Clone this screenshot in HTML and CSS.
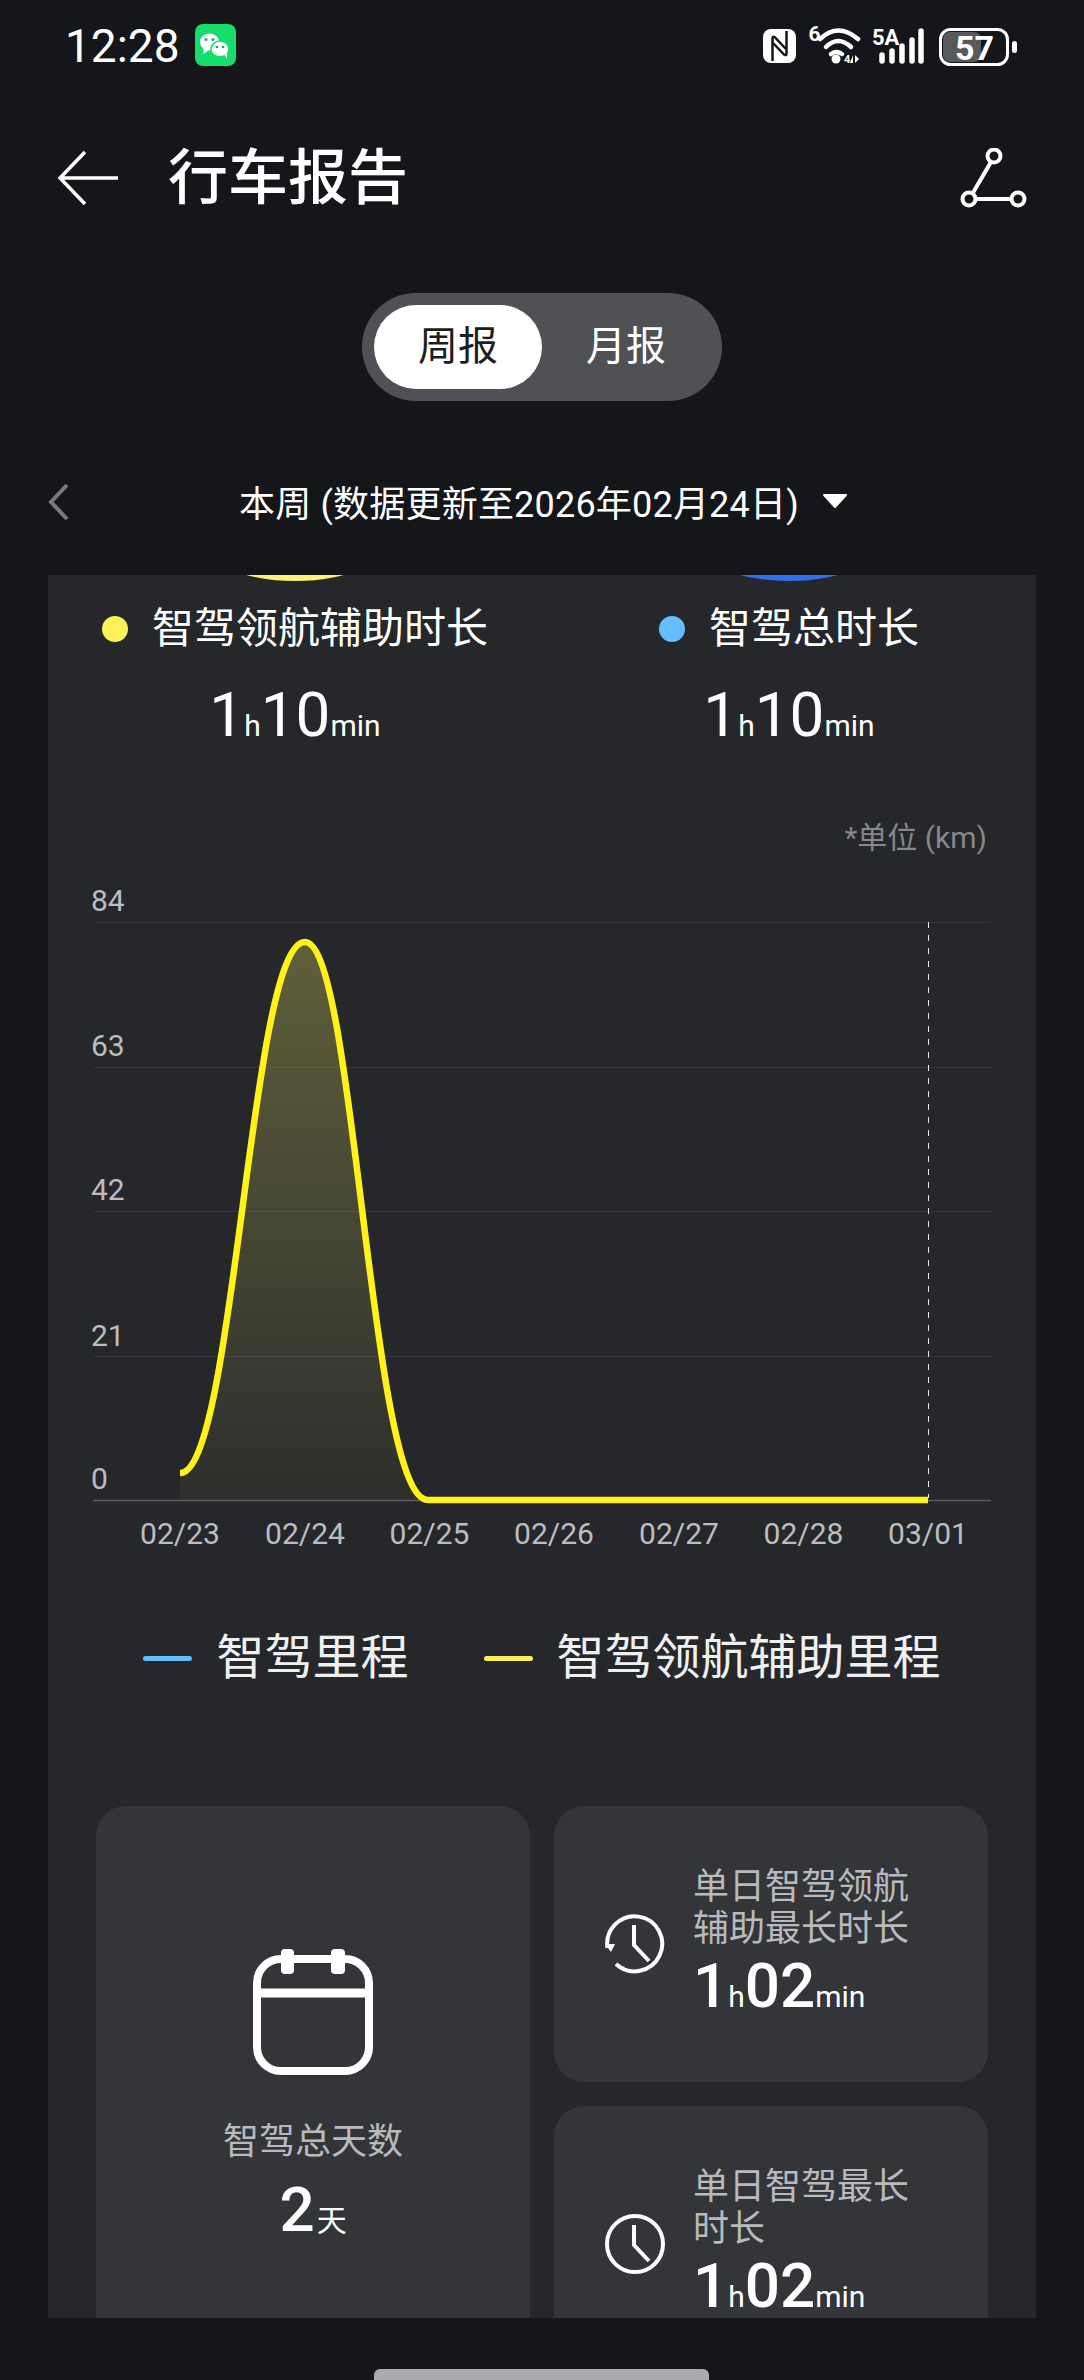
FILE: index.html
```html
<!DOCTYPE html>
<html lang="zh-CN">

<head>
    <meta charset="UTF-8">
    <meta name="viewport" content="width=device-width, initial-scale=1.0">
    <title>行车报告</title>
    <link rel="stylesheet" href="styles.css">
</head>

<body>
    <div class="status-bar">
        <span class="clock-time">12:28</span>
        <svg class="wechat" viewBox="0 0 41 42">
            <rect width="41" height="42" rx="8" fill="#17dd6c" />
            <ellipse cx="14.500" cy="18" rx="9.500" ry="8.500" fill="#fff" />
            <path d="M8 23L8.500 30L14 26z" fill="#fff" />
            <ellipse cx="25" cy="25" rx="9" ry="8" fill="#fff" stroke="#17dd6c" stroke-width="1.500" />
            <path d="M29 30L32 35L32 27z" fill="#fff" />
            <circle cx="11" cy="15.500" r="1.500" fill="#17a85a" />
            <circle cx="18" cy="15.500" r="1.500" fill="#17a85a" />
            <circle cx="22" cy="23" r="1.300" fill="#17a85a" />
            <circle cx="28" cy="23" r="1.300" fill="#17a85a" />
        </svg>
        <svg class="status-icons" viewBox="763 20 256 50">
            <rect x="763" y="29" width="33" height="34" rx="8" fill="#fff" />
            <g fill="none" stroke="#14161a" stroke-width="2.500">
                <path d="M772.500 61V38Q772.500 36 775 37.500L786 49" />
                <path d="M786.500 31V54Q786.500 56 784 54.500L773 43" />
            </g>
            <text class="tiny" x="808.500" y="41" font-size="21">6</text>
            <g fill="none" stroke="#fff" stroke-width="4.500" stroke-linecap="round">
                <path d="M820 39Q838 22 858 39" />
                <path d="M826 47Q838 35 851 47" />
                <path d="M831 54Q836 50 842 54" />
            </g>
            <circle cx="836" cy="59" r="4.500" fill="#fff" />
            <text class="tiny" x="844" y="63" font-size="11">4</text>
            <path d="M853 55v8h-3z" fill="#fff" />
            <path d="M855 55v8l4-4z" fill="#fff" />
            <text class="tiny" x="872" y="45" font-size="22">5A</text>
            <g fill="none" stroke="#fff" stroke-width="5.500" stroke-linecap="round">
                <path d="M882 55V61" />
                <path d="M892 51V61" />
                <path d="M902 46V61" />
                <path d="M912 40V61" />
                <path d="M921 31V61" />
            </g>
            <rect x="943" y="32" width="38" height="30" rx="7" fill="#57595d" />
            <rect x="940.500" y="29.500" width="67" height="35" rx="10" fill="none" stroke="#fff" stroke-width="3" />
            <text class="tiny" x="955" y="60" font-size="34">57</text>
            <rect x="1012" y="41" width="5" height="12" rx="2.500" fill="#fff" />
        </svg>
    </div>

    <header class="top-bar">
        <svg class="back-icon" viewBox="0 0 62 56">
            <path d="M28 2L3 28L28 54M3 28H61" fill="none" stroke="#fff" stroke-width="3.500" />
        </svg>
        <h1 class="page-title">行车报告</h1>
        <svg class="share-icon" viewBox="0 0 68 60">
            <g fill="none" stroke="#fff" stroke-width="4">
                <circle cx="34" cy="8" r="6.500" />
                <circle cx="9" cy="51" r="6.500" />
                <circle cx="58" cy="51" r="6.500" />
                <path d="M31 14L12.500 45.500M15.500 51H51.500" />
            </g>
        </svg>
    </header>

    <div class="period-switch">
        <span class="period-option active">周报</span>
        <span class="period-option">月报</span>
    </div>

    <div class="date-row">
        <svg class="prev-icon" viewBox="0 0 21 38">
            <path d="M19 2L3 19L19 36" fill="none" stroke="#77797c" stroke-width="4" />
        </svg>
        <div class="date-label">
            <span>本周 (数据更新至2026年02月24日)</span>
            <svg class="caret" viewBox="0 0 26 16">
                <path d="M2 2H24L13 14z" fill="#fff" stroke="#fff" stroke-width="2" stroke-linejoin="round" />
            </svg>
        </div>
    </div>

    <main class="report-card">
        <div class="metrics">
            <div class="metric">
                <div class="metric-arc yellow-arc"></div>
                <div class="metric-label"><i class="dot yellow-dot"></i>智驾领航辅助时长</div>
                <div class="value metric-value"><b>1</b><small>h</small><b>10</b><small>min</small></div>
            </div>
            <div class="metric">
                <div class="metric-arc blue-arc"></div>
                <div class="metric-label"><i class="dot blue-dot"></i>智驾总时长</div>
                <div class="value metric-value"><b>1</b><small>h</small><b>10</b><small>min</small></div>
            </div>
        </div>

        <div class="unit-note">*单位 (km)</div>

        <!-- viewBox uses page coordinates so the values read off the reference directly -->
        <svg class="chart" viewBox="48 880 988 680">
            <defs>
                <linearGradient id="area-fill" x1="0" y1="0" x2="0" y2="1">
                    <stop offset="0" stop-color="#f4f060" stop-opacity="0.28" />
                    <stop offset="1" stop-color="#f4f060" stop-opacity="0.04" />
                </linearGradient>
            </defs>
            <g stroke="#33353a" stroke-width="1">
                <path d="M93 922.500H991" />
                <path d="M93 1067.500H991" />
                <path d="M93 1211.500H991" />
                <path d="M93 1356.500H991" />
            </g>
            <path d="M93 1500.500H991" stroke="#5a5c60" stroke-width="1.500" />
            <path d="M928.500 922V1498" stroke="#e8e8e8" stroke-width="1" stroke-dasharray="6 7" />
            <path d="M180 1473C235 1473 250 942 305 942C355 942 370 1500 428 1500V1500.500H180z" fill="url(#area-fill)" />
            <path d="M180 1473C235 1473 250 942 305 942C355 942 370 1500 428 1500H928" fill="none" stroke="#fff21a" stroke-width="6.500" />
            <g class="axis-text">
                <text x="91" y="911">84</text>
                <text x="91" y="1056">63</text>
                <text x="91" y="1200">42</text>
                <text x="91" y="1346">21</text>
                <text x="91" y="1489">0</text>
            </g>
            <g class="axis-text centered">
                <text x="180" y="1544">02/23</text>
                <text x="305" y="1544">02/24</text>
                <text x="429.500" y="1544">02/25</text>
                <text x="554" y="1544">02/26</text>
                <text x="679" y="1544">02/27</text>
                <text x="803.500" y="1544">02/28</text>
                <text x="928" y="1544">03/01</text>
            </g>
        </svg>

        <div class="legend">
            <div class="legend-item"><i class="legend-line blue-line"></i>智驾里程</div>
            <div class="legend-item"><i class="legend-line yellow-line"></i>智驾领航辅助里程</div>
        </div>

        <div class="tiles">
            <div class="tile tile-tall">
                <svg class="calendar-icon" viewBox="0 0 120 126">
                    <rect x="4" y="10" width="112" height="112" rx="24" fill="none" stroke="#fff" stroke-width="8" />
                    <path d="M4 44H116" stroke="#fff" stroke-width="9" />
                    <rect x="28" y="0" width="13" height="25" rx="4" fill="#fff" />
                    <rect x="78" y="0" width="14" height="25" rx="4" fill="#fff" />
                </svg>
                <div class="tile-label">智驾总天数</div>
                <div class="value"><b>2</b><small class="cjk-unit">天</small></div>
            </div>
            <div class="tile tile-row">
                <svg class="clock-icon" viewBox="0 0 60 60">
                    <path d="M2.500 34A27.500 27.500 0 1 1 11 50" fill="none" stroke="#fff" stroke-width="4" />
                    <path d="M0 30L6 38L10 30z" fill="#fff" />
                    <path d="M29 11V31L44 47" fill="none" stroke="#fff" stroke-width="4" />
                </svg>
                <div class="tile-text">
                    <div class="tile-label">单日智驾领航辅助最长时长</div>
                    <div class="value"><b>1</b><small>h</small><b>02</b><small>min</small></div>
                </div>
            </div>
            <div class="tile tile-row">
                <svg class="clock-icon" viewBox="0 0 60 60">
                    <circle cx="30" cy="30" r="28" fill="none" stroke="#fff" stroke-width="4" />
                    <path d="M29 11V31L44 47" fill="none" stroke="#fff" stroke-width="4" />
                </svg>
                <div class="tile-text">
                    <div class="tile-label">单日智驾最长时长</div>
                    <div class="value"><b>1</b><small>h</small><b>02</b><small>min</small></div>
                </div>
            </div>
        </div>
    </main>

    <div class="home-bar"></div>
</body>

</html>
```

FILE: styles.css
```css
* {
    box-sizing: border-box;
}

html,
body {
    margin: 0;
    padding: 0;
}

body {
    width: 1084px;
    height: 2380px;
    overflow: hidden;
    background-color: #14161a;
    color: #fff;
    font-family: Roboto, "Noto Sans CJK SC", sans-serif;
}

svg {
    display: block;
    flex-shrink: 0;
}

.status-bar {
    display: flex;
    align-items: center;
    height: 90px;
    padding-left: 65px;
}

.clock-time {
    padding-top: 2px;
    font-size: 46px;
    line-height: 90px;
}

.wechat {
    width: 41px;
    height: 42px;
    margin-left: 15px;
}

.status-icons {
    width: 256px;
    height: 50px;
    margin-left: auto;
    margin-right: 65px;
}

.tiny {
    fill: #fff;
    font-weight: 700;
    font-family: Roboto, sans-serif;
}

.top-bar {
    display: flex;
    align-items: center;
    height: 176px;
    padding: 0 57px 0 57px;
}

.back-icon {
    width: 62px;
    height: 56px;
}

.page-title {
    margin: 2px 0 0 49px;
    font-size: 60px;
    font-weight: 500;
    line-height: 80px;
}

.share-icon {
    width: 68px;
    height: 60px;
    margin-left: auto;
    margin-right: -1px;
}

.period-switch {
    display: flex;
    width: 360px;
    height: 108px;
    margin: 27px auto 0;
    padding: 12px;
    border-radius: 54px;
    background-color: #505155;
}

.period-option {
    width: 168px;
    border-radius: 42px;
    font-size: 40px;
    line-height: 84px;
    text-align: center;
}

.period-option.active {
    background-color: #fff;
    color: #1c1d20;
}

.date-row {
    display: flex;
    align-items: center;
    height: 80px;
    margin-top: 61px;
    padding-left: 48px;
}

.prev-icon {
    width: 21px;
    height: 38px;
}

.date-label {
    display: flex;
    flex: 1;
    align-items: center;
    justify-content: center;
    gap: 23px;
    padding-right: 66px;
    padding-bottom: 2px;
    font-size: 36px;
    letter-spacing: 0.2px;
}

.caret {
    width: 26px;
    height: 16px;
}

.report-card {
    width: 988px;
    height: 1743px;
    margin: 33px 0 0 48px;
    overflow: hidden;
    background-color: #25272b;
}

.metrics {
    display: flex;
}

.metric {
    width: 494px;
    text-align: center;
}

/* only the bottom of a larger circle shows at the top of the card */
.metric-arc {
    width: 97px;
    height: 6px;
    margin: 0 auto;
    clip-path: circle(200px at 50% -194px);
}

.yellow-arc {
    background-color: #fff07a;
}

.blue-arc {
    background-color: #2f6fed;
}

.metric-label {
    display: flex;
    align-items: center;
    justify-content: center;
    margin-top: 23px;
    font-size: 42px;
    line-height: 50px;
}

.dot {
    width: 26px;
    height: 26px;
    margin-right: 24px;
    border-radius: 50%;
}

.yellow-dot {
    background-color: #fff05a;
}

.blue-dot {
    background-color: #63bdff;
}

.value {
    font-size: 62px;
    line-height: 72px;
}

.value b {
    font-weight: 500;
}

.value small {
    font-size: 30px;
    font-weight: 400;
}

.metric-value {
    margin-top: 25px;
}

.metric-value b {
    font-weight: 400;
}

.unit-note {
    margin-top: 56px;
    padding-right: 49px;
    color: #86888c;
    font-size: 30px;
    line-height: 40px;
    text-align: right;
}

.chart {
    width: 988px;
    height: 680px;
    margin-top: 22px;
}

.axis-text {
    fill: #bcbdc0;
    font-size: 30px;
}

.axis-text.centered {
    text-anchor: middle;
}

.legend {
    display: flex;
    justify-content: center;
    gap: 75px;
    margin-top: 68px;
}

.legend-item {
    display: flex;
    align-items: center;
    gap: 24px;
    color: #f0f0f0;
    font-size: 48px;
    line-height: 60px;
}

.legend-line {
    width: 49px;
    height: 5px;
    border-radius: 3px;
}

.blue-line {
    background-color: #63bdff;
}

.yellow-line {
    background-color: #fff05a;
}

.tiles {
    display: grid;
    grid-template-columns: 434px 434px;
    grid-auto-rows: 276px;
    gap: 24px;
    margin: 118px 0 0 48px;
}

.tile {
    border-radius: 30px;
    background-color: #333539;
}

.tile-tall {
    display: flex;
    grid-row: span 2;
    flex-direction: column;
    align-items: center;
    justify-content: center;
    padding-top: 17px;
    text-align: center;
}

.calendar-icon {
    width: 120px;
    height: 126px;
}

.tile-tall .tile-label {
    margin-top: 46px;
}

.tile-tall .value {
    margin-top: 11px;
}

.tile-label {
    color: #b9babd;
    font-size: 36px;
    line-height: 42px;
}

.cjk-unit {
    margin-left: 2px;
}

.tile-row {
    display: flex;
    align-items: center;
    gap: 28px;
    padding-left: 51px;
}

.clock-icon {
    width: 60px;
    height: 60px;
}

.tile-text {
    width: 218px;
    padding-top: 10px;
}

.home-bar {
    width: 335px;
    height: 11px;
    margin: 51px 0 0 374px;
    border-radius: 6px 6px 0 0;
    background-color: #a9aaad;
}
```
